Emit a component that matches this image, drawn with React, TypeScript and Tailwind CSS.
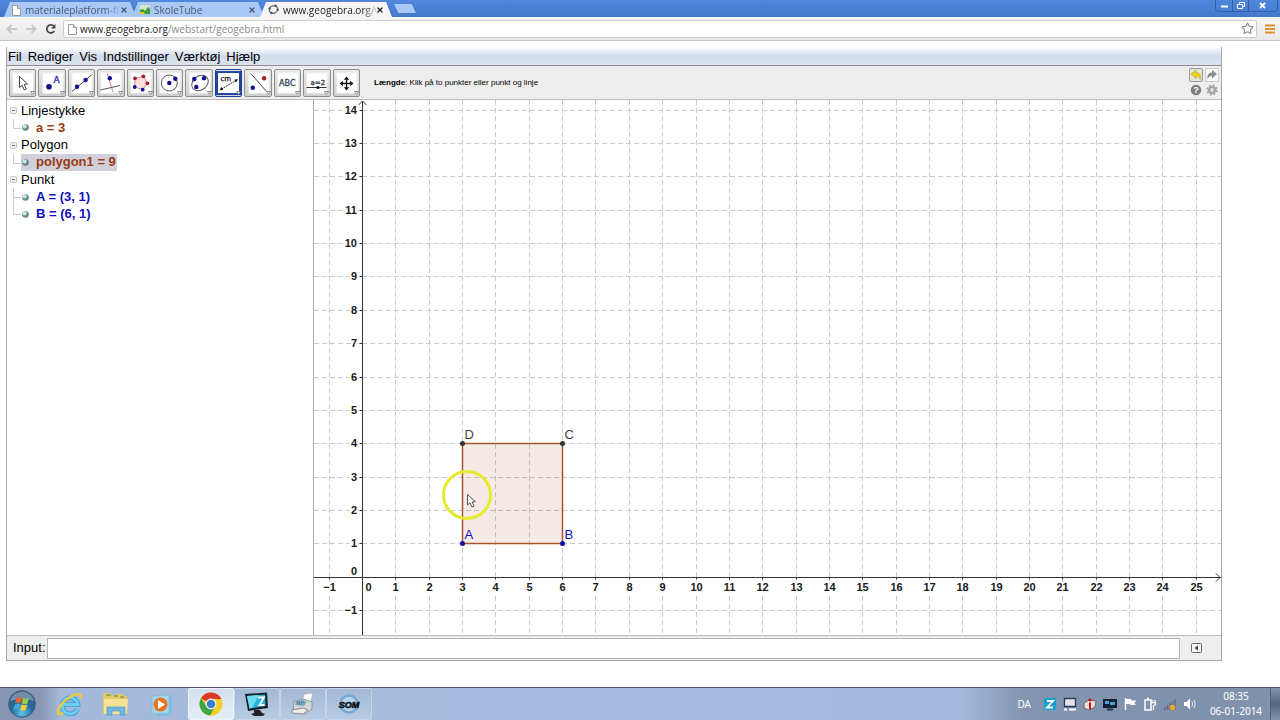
import type { ReactNode } from "react";
import { Star, X } from "lucide-react";

const BLUE = "#10108c";
const RED = "#a3202c";

/* ---------- Browser ---------- */

function PageIcon() {
  return (
    <svg className="h-3 w-[9px] shrink-0" viewBox="0 0 9 12" fill="#fff" stroke="#9a9a9a" aria-hidden="true">
      <path d="M.5 1.5h5l3 3v7h-8z" />
      <path d="M5.500 1.500v3h3" fill="#ddd" />
    </svg>
  );
}

function Tab({ icon, title, active = false }: { icon: ReactNode; title: string; active?: boolean }) {
  const tone = active ? "bg-[#f5f5f5] text-[#222]" : "bg-[#a9c8f5] text-[#4b5a70]";
  return (
    <div
      className={`flex h-[15px] w-[132px] items-center pl-2 pr-2 text-[10px] leading-[14px] [clip-path:polygon(6px_0,calc(100%-6px)_0,100%_100%,0_100%)] ${tone}`}
    >
      <button className="flex min-w-0 flex-1 items-center gap-1 text-left">
        {icon}
        <span className="whitespace-nowrap [mask-image:linear-gradient(to_right,#000_80px,transparent_96px)]">
          {title}
        </span>
      </button>
      <button aria-label={`Luk ${title}`}>
        <X className="h-2 w-2" strokeWidth={4} />
      </button>
    </div>
  );
}

function Browser() {
  return (
    <header className="font-['Open_Sans','Noto_Sans',sans-serif]">
      <div className="flex h-[17px] items-end justify-between bg-linear-to-b from-[#5088dc] to-[#4378cb]">
        <div className="flex items-end -space-x-1 pl-1">
          <Tab icon={<PageIcon />} title="materialeplatform-fi" />
          <Tab
            icon={
              <svg className="h-[9px] w-[10px] shrink-0" viewBox="0 0 10 9" aria-hidden="true">
                <path d="M0 0h10v9H0z" fill="#cfe8ce" />
                <path d="M0 9V5l3-1 2 2 3-4 2 2v5z" fill="#3d9b37" />
                <path d="M0 9V7l4 0 1 2z" fill="#e9c921" />
              </svg>
            }
            title="SkoleTube"
          />
          <Tab
            active
            icon={
              <svg className="h-[11px] w-[11px] shrink-0" viewBox="0 0 11 11" aria-hidden="true">
                <ellipse cx="5.500" cy="5.500" rx="4.300" ry="3.700" fill="none" stroke="#6c6c78" strokeWidth="1.300" transform="rotate(-25 5.5 5.5)" />
                <g fill="#55556a">
                  <circle cx="1.600" cy="4.500" r="1.200" />
                  <circle cx="7.500" cy="1.800" r="1.200" />
                  <circle cx="9.600" cy="5.800" r="1.200" />
                  <circle cx="3.500" cy="9" r="1.200" />
                </g>
              </svg>
            }
            title="www.geogebra.org/v"
          />
          <div className="pl-1.5">
            <button
              aria-label="Ny fane"
              className="mb-[4px] block h-[9px] w-[22px] bg-[#a9c8f5] [clip-path:polygon(0_0,80%_0,100%_100%,20%_100%)]"
            />
          </div>
        </div>
        <div className="mr-[2px] flex h-3 self-start rounded-b-sm border border-t-0 border-[#3561a8] text-white">
          <button aria-label="Minimer" className="w-[17px] border-r border-[#3561a8]">
            <svg viewBox="0 0 17 11" className="h-[11px]"><path d="M5 6.500h7" stroke="#fff" strokeWidth="2" /></svg>
          </button>
          <button aria-label="Gendan" className="w-4 border-r border-[#3561a8]">
            <svg viewBox="0 0 16 11" className="h-[11px]" fill="none" stroke="#fff">
              <path d="M6.500 4V2.500h5v4H10M4.500 4.500h5v4h-5z" />
            </svg>
          </button>
          <button aria-label="Luk" className="w-7">
            <svg viewBox="0 0 27 11" className="h-[11px]"><path d="M11 3l5 5M16 3l-5 5" stroke="#fff" strokeWidth="1.800" /></svg>
          </button>
        </div>
      </div>
      <div className="flex h-6 items-center border-b border-[#c4c4c4] bg-linear-to-b from-[#f6f6f6] to-[#e9e9e9] pl-1.5 pr-1">
        <button aria-label="Tilbage" className="w-5">
          <svg viewBox="0 0 20 12" className="h-3" fill="none" stroke="#c6c6c6" strokeWidth="1.800"><path d="M11 6H2M5.500 2L1.500 6l4 4" /></svg>
        </button>
        <button aria-label="Frem" className="w-5">
          <svg viewBox="0 0 20 12" className="h-3" fill="none" stroke="#c6c6c6" strokeWidth="1.800"><path d="M0 6h9M5.500 2l4 4-4 4" /></svg>
        </button>
        <button aria-label="Genindlæs" className="w-[17px]">
          <svg viewBox="0 0 18 12" className="h-3" fill="none" stroke="#4c4c4c" strokeWidth="1.800">
            <path d="M8 3.500A4 4 0 1 0 8.300 8" />
            <path d="M9.500 1v4.500H5z" fill="#4c4c4c" stroke="none" />
          </svg>
        </button>
        <div className="flex h-[18px] min-w-0 flex-1 items-center gap-[3px] rounded-xs border border-[#cfcfcf] bg-white pl-1 pr-0.5">
          <PageIcon />
          <a href="#adresse" className="flex-1 text-[10px] leading-4 text-[#8a8a8a]">
            <span className="text-[#222]">www.geogebra.org</span>/webstart/geogebra.html
          </a>
          <button aria-label="Bogmærk">
            <Star className="h-[13px] w-[13px] text-[#888]" strokeWidth={2} />
          </button>
        </div>
        <button aria-label="Menu" className="ml-2">
          <svg viewBox="0 0 10 10" className="mr-px h-2.5 w-2.5"><path d="M0 1.500h10M0 5h10M0 8.500h10" stroke="#e0912b" strokeWidth="2" /></svg>
        </button>
      </div>
    </header>
  );
}

/* ---------- GeoGebra ---------- */

const MENUS = ["Fil", "Rediger", "Vis", "Indstillinger", "Værktøj", "Hjælp"];

const dot = (x: number, y: number, fill = BLUE, r = 2.2) => <circle cx={x} cy={y} r={r} fill={fill} />;

const TOOLS: { name: string; art: ReactNode }[] = [
  {
    name: "Flyt",
    art: <path d="M10.500 7.500v11l2.600-2.300 2.200 4.800 2-1-2.200-4.600 3.400-.4z" fill="#fff" stroke="#444" />,
  },
  {
    name: "Nyt punkt",
    art: (
      <>
        {dot(10, 17.7, BLUE, 2.8)}
        <text x="14.500" y="14" fontSize="9" fill="#3434c8" stroke="#3434c8" strokeWidth=".4">A</text>
      </>
    ),
  },
  {
    name: "Linje gennem to punkter",
    art: (
      <>
        <path d="M4 22.500L23.500 6" stroke="#444" />
        {dot(9, 17.7)}
        {dot(17.6, 11)}
      </>
    ),
  },
  {
    name: "Vinkelret linje",
    art: (
      <>
        <path d="M10 4l6 19" stroke="#e08080" />
        <path d="M3.500 21L23 16.500" stroke="#555" />
        {dot(12.8, 9.3)}
      </>
    ),
  },
  {
    name: "Polygon",
    art: (
      <>
        <path d="M8 9.300l8.400-2 4 7-4.700 6.400-8-2.700z" fill="#fbdede" stroke="#d08a90" />
        {dot(8, 9.3, RED, 1.9)}
        {dot(16.4, 7.3, RED, 1.9)}
        {dot(20.4, 14.3, RED, 1.9)}
        {dot(15.7, 20.7, BLUE, 1.9)}
        {dot(7.7, 18, BLUE, 1.9)}
      </>
    ),
  },
  {
    name: "Cirkel",
    art: (
      <>
        <circle cx="13.300" cy="14" r="8" fill="none" stroke="#555" />
        {dot(13.3, 14)}
        {dot(19.3, 9.7)}
      </>
    ),
  },
  {
    name: "Ellipse",
    art: (
      <>
        <ellipse cx="14" cy="14" rx="9" ry="7" fill="none" stroke="#555" transform="rotate(-38 14 14)" />
        {dot(8.3, 10)}
        {dot(18, 9.3)}
        {dot(10.3, 18)}
      </>
    ),
  },
  {
    name: "Længde",
    art: (
      <>
        <text x="5.500" y="11.500" fontSize="7" fill="#222" stroke="#222" strokeWidth=".3">cm</text>
        <path d="M6.500 20L21 11.500" stroke="#333" strokeDasharray="2 .6" />
        <path d="M4.500 21.200l2-3.200 1.800 3zM23 10.300l-2 3.200-1.800-3z" fill="#111" />
      </>
    ),
  },
  {
    name: "Spejling",
    art: (
      <>
        <path d="M5.800 4.500L22 23" stroke="#444" />
        {dot(7.8, 18.7)}
        {dot(19.1, 9.3, RED)}
      </>
    ),
  },
  {
    name: "Indsæt tekst",
    art: <text x="13.300" y="17" fontSize="8" fill="#33475a" stroke="#33475a" strokeWidth=".3" textAnchor="middle">ABC</text>,
  },
  {
    name: "Skyder",
    art: (
      <>
        <text x="7.500" y="15.500" fontSize="7" fill="#333" stroke="#333" strokeWidth=".3">a=2</text>
        <path d="M3.500 18.500h20" stroke="#333" />
        {dot(15, 18.5, "#111", 1.6)}
      </>
    ),
  },
  {
    name: "Flyt tegneblok",
    art: (
      <>
        <path d="M13.500 9v11M8 14.500h11" stroke="#111" strokeWidth="1.300" />
        <path d="M13.500 7.500l2.700 3.300h-5.400zM13.500 21.500l2.700-3.300h-5.400zM6.500 14.500l3.300-2.700v5.400zM20.500 14.500l-3.300-2.700v5.400z" fill="#111" />
      </>
    ),
  },
];

function Toolbar() {
  return (
    <div className="flex h-[34px] items-center border-b border-[#bbb] bg-[#eee] pl-[2px] pr-[2px]">
      <div className="grid w-[351px] shrink-0 grid-cols-12 gap-x-0.5">
        {TOOLS.map(({ name, art }) => {
          const selected = name === "Længde";
          return (
            <button
              key={name}
              aria-label={name}
              className={`flex h-7 justify-center rounded-xs border bg-linear-to-b from-[#e9e9e9] to-[#cfcfcf] ${
                selected ? "border-[#1c3c94]" : "border-[#8e8e8e]"
              }`}
            >
              <svg viewBox="0 1 27 26" className="h-[26px] w-[27px] shrink-0 -mx-px" fontFamily="DejaVu Sans">
                <rect
                  x={selected ? 2 : 4}
                  y={selected ? 3 : 4}
                  width={selected ? 23 : 20}
                  height={selected ? 22 : 20}
                  fill="#fff"
                  stroke={selected ? "#1f459f" : "#f6f6f6"}
                  strokeWidth={selected ? 2 : 1}
                />
                {art}
                <path d="M21.500 22.500h4l-2 3z" fill="#fff" stroke="#777" strokeWidth=".8" />
              </svg>
            </button>
          );
        })}
      </div>
      <p className="ml-3.5 flex-1 whitespace-nowrap text-[8px] leading-3 text-black">
        <b>Længde</b>: Klik på to punkter eller punkt og linje
      </p>
      <div className="grid grid-cols-2 gap-x-0.5 gap-y-px">
        <button aria-label="Fortryd" className="flex h-3.5 w-3.5 items-center justify-center rounded-xs border border-[#999] bg-[#e4e4d8]">
          <svg viewBox="0 0 12 12" className="h-3 w-3 shrink-0"><path d="M1 5l5-4v2.500c3.500 0 5 2.500 4.500 7C9.500 8 8.500 7 6 7v2.500z" fill="#ecd51c" stroke="#b7a21c" strokeWidth=".6" /></svg>
        </button>
        <button aria-label="Gentag" className="flex h-3.5 w-3.5 items-center justify-center border border-[#ccc] bg-[#f8f8f8]">
          <svg viewBox="0 0 12 12" className="h-3 w-3 shrink-0"><path d="M11 5L6 1v2.500c-3.500 0-5 2.500-4.500 7C2.500 8 3.500 7 6 7v2.500z" fill="#8e8e8e" /></svg>
        </button>
        <button aria-label="Hjælp til værktøj" className="flex h-3.5 w-3.5 items-center justify-center">
          <svg viewBox="0 0 12 12" className="h-3 w-3 shrink-0">
            <circle cx="6" cy="6" r="5.300" fill="#808080" />
            <text x="6" y="9" fontSize="8.500" fontWeight="bold" textAnchor="middle" fill="#fff">?</text>
          </svg>
        </button>
        <button aria-label="Indstillinger for visning" className="flex h-3.5 w-3.5 items-center justify-center">
          <svg viewBox="0 0 12 12" className="h-3 w-3 shrink-0">
            <circle cx="6" cy="6" r="4.600" fill="none" stroke="#a2a2a2" strokeWidth="1.800" strokeDasharray="2 1.610" />
            <circle cx="6" cy="6" r="3" fill="#ddd" stroke="#a2a2a2" strokeWidth="2" />
          </svg>
        </button>
      </div>
    </div>
  );
}

type Row = { text: string; kind: "group" | "item"; tone?: string; last?: boolean; selected?: boolean };

const ROWS: Row[] = [
  { text: "Linjestykke", kind: "group" },
  { text: "a = 3", kind: "item", tone: "text-[#9a3c12]", last: true },
  { text: "Polygon", kind: "group" },
  { text: "polygon1 = 9", kind: "item", tone: "text-[#9a3c12]", last: true, selected: true },
  { text: "Punkt", kind: "group" },
  { text: "A = (3, 1)", kind: "item", tone: "text-[#1010c0]" },
  { text: "B = (6, 1)", kind: "item", tone: "text-[#1010c0]", last: true },
];

function AlgebraView() {
  return (
    <aside className="w-[307px] shrink-0 border-r border-[#a8a8a8] bg-white pl-[3px] pt-0.5">
      <ul className="grid h-[121px] grid-rows-7 text-[13px] leading-4">
        {ROWS.map((row) =>
          row.kind === "group" ? (
            <li key={row.text} className="flex items-center">
              <button className="flex items-center gap-1">
                <svg viewBox="0 0 7 7" className="h-[7px] w-[7px]"><rect x=".5" y=".5" width="6" height="6" rx="1" fill="#eee" stroke="#c4c4c4" /><path d="M2 3.500h3" stroke="#777" /></svg>
                {row.text}
              </button>
            </li>
          ) : (
            <li key={row.text} className="flex items-center">
              <svg viewBox="0 0 11 18" className="h-[18px] w-[11px] shrink-0"><path d={row.last ? "M3.500 0v9.500H11" : "M3.500 0v18M3.500 9.500H11"} fill="none" stroke="#ccc" /></svg>
              <button className={`flex h-full items-center gap-[7px] px-px font-bold ${row.tone} ${row.selected ? "bg-[#d0d0dd]" : ""}`}>
                <svg viewBox="0 0 7 7" className="h-[7px] w-[7px]">
                  <circle cx="3.500" cy="3.500" r="3.300" fill="#5d8c8c" />
                  <circle cx="2.600" cy="2.600" r="2" fill="#cfe6e6" />
                </svg>
                {row.text}
              </button>
            </li>
          ),
        )}
      </ul>
    </aside>
  );
}

const UNIT = 33.35;
const px = (x: number) => Math.round(48 + x * UNIT) + 0.5;
const py = (y: number) => Math.round(476.6 - y * UNIT) + 0.5;
const range = (from: number, to: number) => Array.from({ length: to - from + 1 }, (_, i) => from + i);
const label = (n: number) => (n < 0 ? `−${-n}` : `${n}`);

function Graph() {
  return (
    <svg className="block h-[535px] min-w-0 flex-1 bg-white" role="img" aria-label="Tegneblok">
      <g stroke="#cacaca" strokeDasharray="5 3">
        {range(-1, 25).filter((n) => n !== 0).map((n) => (
          <line key={n} x1={px(n)} x2={px(n)} y1="0" y2="100%" />
        ))}
        {range(-1, 14).filter((n) => n !== 0).map((n) => (
          <line key={n} y1={py(n)} y2={py(n)} x1="0" x2="100%" />
        ))}
      </g>
      <g stroke="#333">
        <line x1="0" x2="100%" y1={py(0)} y2={py(0)} />
        <line x1={px(0)} x2={px(0)} y1="1" y2="100%" />
        {range(-1, 25).map((n) => (
          <line key={n} x1={px(n)} x2={px(n)} y1={py(0)} y2={py(0) + 2} />
        ))}
        {range(-1, 14).map((n) => (
          <line key={n} x1={px(0) - 3} x2={px(0)} y1={py(n)} y2={py(n)} />
        ))}
        <path d="M44.500 5l4-4 4 4" fill="none" />
        <svg x="100%" y={py(0)} overflow="visible">
          <path d="M-5-4l4 4-4 4" fill="none" />
        </svg>
      </g>
      <g fontSize="11" fontWeight="bold" fill="#1a1a1a" stroke="#fff" strokeWidth="4" paintOrder="stroke">
        {range(-1, 25).map((n) => (
          <text key={n} x={n === 0 ? px(0) + 6 : px(n)} y="491" textAnchor="middle">{label(n)}</text>
        ))}
        {range(-1, 14).map((n) => (
          <text key={n} x="43" y={n === 0 ? 475 : py(n) + 3.5} textAnchor="end">{label(n)}</text>
        ))}
      </g>
      <rect x={px(3)} y={py(4)} width={px(6) - px(3)} height={py(1) - py(4)} fill="#993300" fillOpacity=".1" stroke="#a4572f" strokeWidth="1.500" />
      {dot(px(3), py(4), "#333", 2.5)}
      {dot(px(6), py(4), "#333", 2.5)}
      {dot(px(3), py(1), "#1010a0", 2.5)}
      {dot(px(6), py(1), "#1010a0", 2.5)}
      <g fontSize="13">
        <text x={px(3) + 2} y={py(4) - 5} fill="#444">D</text>
        <text x={px(6) + 2} y={py(4) - 5} fill="#444">C</text>
        <text x={px(3) + 2} y={py(1) - 5} fill="#1010c0">A</text>
        <text x={px(6) + 2} y={py(1) - 5} fill="#1010c0">B</text>
      </g>
      <circle cx="153" cy="395" r="23.500" fill="none" stroke="#e6ea2c" strokeWidth="3" />
      <path d="M153.500 394.500v10.500l2.500-2.200 2 4.200 2-1-2-4 3.300-.3z" fill="#fff" stroke="#555" />
    </svg>
  );
}

function GeoGebra() {
  return (
    <main className="ml-1.5 mr-[58px] mt-1.5 border-x border-b border-[#a8a8a8] font-['Liberation_Sans',Arial,sans-serif] text-black">
      <nav className="flex h-[19px] items-center gap-1.5 border-b border-[#8f8f8f] bg-linear-to-b from-white via-[#d3dcec] to-[#dbe2ef] pl-px pt-px text-[13px] leading-4">
        {MENUS.map((m) => (
          <button key={m}>{m}</button>
        ))}
      </nav>
      <Toolbar />
      <div className="flex">
        <AlgebraView />
        <Graph />
      </div>
      <form className="flex h-[25px] items-center border-t border-[#bbb] bg-[#eee] pl-1.5">
        <label htmlFor="command" className="w-[34px] text-[13px] leading-4">Input:</label>
        <input id="command" className="h-[21px] min-w-0 flex-1 border border-[#b5b5b5] bg-white px-1 text-[13px] outline-none" />
        <button type="button" aria-label="Vis kommandoer" className="ml-[11px] mr-[19px]">
          <svg viewBox="0 0 11 10" className="h-2.5 w-[11px]"><rect x=".5" y=".5" width="10" height="9" rx="1" fill="#f4f4f4" stroke="#666" /><path d="M7 2.500v5L3.500 5z" fill="#444" /></svg>
        </button>
      </form>
    </main>
  );
}

/* ---------- Taskbar ---------- */

function ChromeIcon() {
  return (
    <svg viewBox="0 0 24 24" className="h-6 w-6" aria-hidden="true">
      <circle cx="12" cy="12" r="11.500" fill="#f4cf2a" />
      <path d="M12 12L2 6.300A11.500 11.500 0 0 1 22.400 7H12z" fill="#d83a2c" />
      <path d="M2 6.300A11.500 11.500 0 0 0 11 23.500l5.200-9L12 12 7.500 14.500z" fill="#3fa648" />
      <circle cx="12" cy="12" r="5.400" fill="#fff" />
      <circle cx="12" cy="12" r="4.300" fill="#3c7fd0" />
    </svg>
  );
}

const OPEN_APPS: { name: string; art: ReactNode; active?: boolean }[] = [
  { name: "Google Chrome", active: true, art: <ChromeIcon /> },
  {
    name: "Zoom-skærm",
    art: (
      <svg viewBox="0 0 28 26" className="h-[26px] w-7">
        <path d="M11 19h6l2 3 3 1-2 2h-9l-3-2 3-1z" fill="#222" />
        <path d="M2 3l22-1.500 1 15.500-20 3z" fill="#1a1f24" />
        <path d="M4 5l18-1.500.5 11.500-16 2.500z" fill="#27b4d8" />
        <path d="M4 5l12-1-7 13-2.500.5z" fill="#6ddcf2" />
        <path d="M15 6.500h6l-4.500 7.500h5" fill="none" stroke="#fff" strokeWidth="1.800" />
      </svg>
    ),
  },
  {
    name: "Printer",
    art: (
      <svg viewBox="0 0 28 26" className="h-[26px] w-7">
        <path d="M15 3l9-1-3 13H12z" fill="#fafafa" stroke="#aaa" strokeWidth=".7" />
        <path d="M5 10l9-2 9 3v7l-7 5-12-2z" fill="#d5d8d9" stroke="#888" strokeWidth=".8" />
        <path d="M7 10l7-1 4 2-3 4-9-1z" fill="#7eacc6" />
        <path d="M3 19l11-2 5 2-5 4-11-1z" fill="#eee" stroke="#777" strokeWidth=".8" />
        <path d="M8 11h7M8 13h6" stroke="#37536a" strokeDasharray="1 1" />
      </svg>
    ),
  },
  {
    name: "SOM",
    art: (
      <svg viewBox="0 0 24 24" className="h-6 w-6">
        <circle cx="12" cy="12" r="8.500" fill="#b5d2ea" stroke="#75a9d4" strokeWidth="2.500" />
        <text x="12" y="15.500" fontSize="9" fontWeight="bold" fontStyle="italic" fontFamily="Liberation Sans" textAnchor="middle" fill="#111" stroke="#111" strokeWidth=".6">SOM</text>
      </svg>
    ),
  },
];

const PINNED: { name: string; art: ReactNode }[] = [
  {
    name: "Internet Explorer",
    art: (
      <>
        <path d="M21.500 18a8 8 0 1 1 .5-4.500H8" fill="none" stroke="#2f9fd8" strokeWidth="4.600" />
        <path d="M21.500 18a8 8 0 1 1 .5-4.500H8" fill="none" stroke="#6fcdf2" strokeWidth="3" />
        <path d="M7 21.500C1 26 0 21 5 14S20 2 24 3.500q2 1 .5 4" fill="none" stroke="#efcb36" strokeWidth="2.200" />
      </>
    ),
  },
  {
    name: "Stifinder",
    art: (
      <>
        <path d="M1 3l3-1h5l1 2h4l1-1h6l1 2h3v18H1z" fill="#e5c964" />
        <path d="M2 8h24l-1 15H2z" fill="#f6e294" />
        <path d="M4 4h5M12 5h4M18 6h4" stroke="#4c8f4f" />
        <path d="M5 24v-8h18v8h-5v-4h-8v4z" fill="#6db6dd" stroke="#4793bf" strokeWidth=".6" />
      </>
    ),
  },
  {
    name: "Medieafspiller",
    art: (
      <>
        <path d="M7 4h17v18l-3 3H9z" fill="#7fbde2" />
        <path d="M4 5l17-1v18l-17 1z" fill="#a6d5ef" stroke="#7db7d8" strokeWidth=".7" />
        <circle cx="12.500" cy="13.500" r="7" fill="#ea7420" />
        <path d="M10 9v9l7-4.500z" fill="#fff" />
      </>
    ),
  },
];

const TRAY: { name: string; art: ReactNode }[] = [
  { name: "Z", art: <><path d="M1 1h12v12H1z" fill="#1aa0cc" /><path d="M4 4h6l-6 6.500h6" fill="none" stroke="#fff" strokeWidth="1.800" /></> },
  { name: "Skærm", art: <><path d="M1.500 1.500h11v8h-11z" fill="#e4e4e4" stroke="#2d3561" strokeWidth="1.300" /><path d="M1 12.500h3M6 12.500h7" stroke="#fff" strokeWidth="2" /></> },
  { name: "Værktøjer", art: <><path d="M1 6l5-3 7 1-1 6-6 3-5-2z" fill="#e9dfd6" stroke="#6b4a44" strokeWidth=".8" /><path d="M6 5.500h2v7H6z" fill="#c3151b" /><circle cx="7" cy="3" r="1.600" fill="#c3151b" /></> },
  { name: "Grafik", art: <><path d="M0 2h14v9H0z" fill="#13202e" /><path d="M2 4h4v3H2zM7 5h5v3H7z" fill="#4da3d8" /><path d="M4 12.500h6" stroke="#26364a" strokeWidth="2" /></> },
  { name: "Løsningscenter", art: <><path d="M2.500 1v12" stroke="#fff" strokeWidth="1.500" /><path d="M3 2h5v1.500h5l-1.500 3L13 8H7V7H3z" fill="#fff" /></> },
  { name: "Strøm", art: <><path d="M2 3h6v10H2zM4 1.500h2" fill="none" stroke="#fff" strokeWidth="1.500" /><path d="M9 3v2M12 3v2M8.500 5.500h4v2l-2 1.500v4" fill="none" stroke="#fff" strokeWidth="1.300" /></> },
  { name: "Netværk", art: <><path d="M2 13v-3M4.500 13V8M7 13V6M9.500 13V4M12 13V2" stroke="#67727e" strokeWidth="1.700" /><circle cx="9.500" cy="10.500" r="2.800" fill="#eca72f" /></> },
  { name: "Lydstyrke", art: <><path d="M1 5h2.500L7 1.500v11L3.500 9H1z" fill="#fff" /><path d="M9 4.500q1.500 2.500 0 5M11 3q2.500 4 0 8" fill="none" stroke="#e5eaf0" /></> },
];

function Taskbar() {
  return (
    <footer className="mt-auto flex h-[33px] items-stretch border-t border-[#4b5563] bg-[linear-gradient(to_right,#8797b3_0,#8797b3_40px,#a5b9da_60px,#a8bde0_50%,#a5badc_75%,#8194b0_80%,#7f92ac)] font-['Noto_Sans',sans-serif] text-white">
      <button aria-label="Start" className="flex w-11 items-center justify-center">
        <svg viewBox="0 0 28 28" className="h-7 w-7">
          <defs>
            <radialGradient id="orb" cx=".5" cy=".85" r=".8">
              <stop offset="0" stopColor="#5cc6ea" />
              <stop offset=".5" stopColor="#256a9c" />
              <stop offset="1" stopColor="#34597f" />
            </radialGradient>
          </defs>
          <circle cx="14" cy="14" r="13.300" fill="url(#orb)" stroke="#3c5878" />
          <path d="M2 11a12.300 12.300 0 0 1 24 0q-12-4-24 0z" fill="#fff" opacity=".3" />
          <path d="M8.500 8q3-1.800 5.500-.3l-1.300 5.500q-2.700-1.500-5.600.2z" fill="#ea6433" />
          <path d="M15 8q3 1.500 6 0l-1.500 5.500q-3 1.500-5.800 0z" fill="#9ccb45" />
          <path d="M6.900 14.500q3-1.700 5.600-.2L11 19.800q-2.500-1.500-5.600.2z" fill="#4aa7e2" />
          <path d="M13.500 14.600q3 1.500 5.800 0L17.800 20q-3 1.600-5.700 0z" fill="#f6cd35" />
        </svg>
      </button>
      <div className="mr-1 flex w-[140px] items-center justify-around pl-[3px]">
        {PINNED.map(({ name, art }) => (
          <button key={name} aria-label={name}>
            <svg viewBox="0 0 27 27" className="h-[27px] w-[27px]">{art}</svg>
          </button>
        ))}
      </div>
      <div className="flex">
        {OPEN_APPS.map(({ name, art, active }) => (
          <button
            key={name}
            aria-label={name}
            className={`flex w-[46px] items-center justify-center rounded-xs border ${
              active ? "border-[#eef4fb] bg-linear-to-b from-[#d3e0ef] to-[#e5eef8]" : "border-[#c5d3e6] bg-linear-to-b from-[#a3b9d6] to-[#b6cae2]"
            }`}
          >
            {art}
          </button>
        ))}
      </div>
      <div className="ml-auto flex items-center">
        <button className="mr-3 text-[10px] leading-4">DA</button>
        <div className="mr-[5px] flex w-[154px] items-center justify-between">
          {TRAY.map(({ name, art }) => (
            <button key={name} aria-label={name}>
              <svg viewBox="0 0 14 14" className="h-3.5 w-3.5">{art}</svg>
            </button>
          ))}
        </div>
        <button className="w-[68px] text-center text-[10px] leading-[15px]">
          <span className="block">08:35</span>
          <span className="block">06-01-2014</span>
        </button>
      </div>
      <button aria-label="Vis skrivebord" className="w-2.5 border-l border-[#4f6078] bg-linear-to-b from-[#8393a8] via-[#55677f] to-[#8393a8]" />
    </footer>
  );
}

export default function App() {
  return (
    <div className="flex min-h-screen flex-col bg-white">
      <Browser />
      <GeoGebra />
      <Taskbar />
    </div>
  );
}
